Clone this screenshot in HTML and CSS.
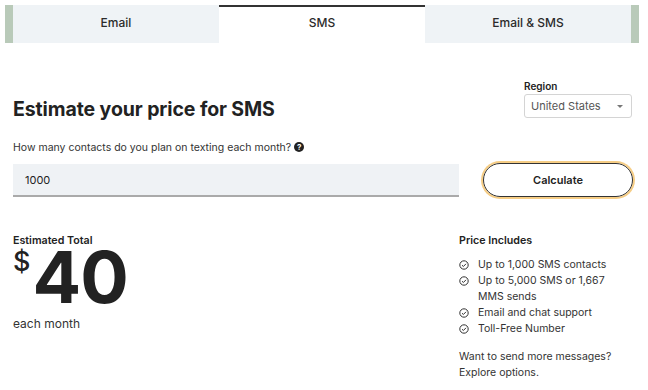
FILE: index.html
```html
<!DOCTYPE html>
<html lang="en">
<head>
<meta charset="utf-8">
<link rel="stylesheet" href="styles.css">
</head>
<body>
<div class="tabs">
  <div class="tab">Email</div>
  <div class="tab active">SMS</div>
  <div class="tab">Email &amp; SMS</div>
</div>
<div class="main">
  <div class="head-row">
    <h1 class="title">Estimate your price for SMS</h1>
    <div class="region">
      <div class="region-label">Region</div>
      <div class="select"><span>United States</span><span class="caret"></span></div>
    </div>
  </div>
  <div class="question">How many contacts do you plan on texting each month? <span class="qmark">?</span></div>
  <div class="input-row">
    <div class="input">1000</div>
    <div class="btn">Calculate</div>
  </div>
  <div class="results">
    <div class="total">
      <div class="total-label">Estimated Total</div>
      <div class="price"><span class="dollar">$</span><span class="amount">40</span></div>
      <div class="per">each month</div>
    </div>
    <div class="includes">
      <div class="inc-title">Price Includes</div>
      <ul class="list">
        <li><svg class="chk" viewBox="0 0 10 10"><circle cx="5" cy="5" r="4.2" fill="none" stroke="#333" stroke-width="1"/><path d="M3 5.2l1.4 1.3L7 3.8" fill="none" stroke="#333" stroke-width="1"/></svg><span>Up to 1,000 SMS contacts</span></li>
        <li><svg class="chk" viewBox="0 0 10 10"><circle cx="5" cy="5" r="4.2" fill="none" stroke="#333" stroke-width="1"/><path d="M3 5.2l1.4 1.3L7 3.8" fill="none" stroke="#333" stroke-width="1"/></svg><span>Up to 5,000 SMS or 1,667 MMS sends</span></li>
        <li><svg class="chk" viewBox="0 0 10 10"><circle cx="5" cy="5" r="4.2" fill="none" stroke="#333" stroke-width="1"/><path d="M3 5.2l1.4 1.3L7 3.8" fill="none" stroke="#333" stroke-width="1"/></svg><span>Email and chat support</span></li>
        <li><svg class="chk" viewBox="0 0 10 10"><circle cx="5" cy="5" r="4.2" fill="none" stroke="#333" stroke-width="1"/><path d="M3 5.2l1.4 1.3L7 3.8" fill="none" stroke="#333" stroke-width="1"/></svg><span>Toll-Free Number</span></li>
      </ul>
      <p class="more">Want to send more messages? Explore options.</p>
    </div>
  </div>
</div>
</body>
</html>
```
FILE: styles.css
```css
* { box-sizing: border-box; }
html, body { margin: 0; padding: 0; background: #fff; }
body { font-family: Inter, "Noto Sans", sans-serif; color: #222; }

.tabs {
  display: flex;
  margin: 5px 9px 0 5px;
  height: 38px;
  border-left: 8px solid #b9cab9;
  border-right: 8px solid #b9cab9;
}
.tab {
  flex: 1;
  display: flex;
  align-items: center;
  justify-content: center;
  background: #eff3f6;
  font-size: 12px;
  font-weight: 500;
  color: #2b2b2b;
  padding-bottom: 4px;
}
.tab.active {
  background: #fff;
  border-top: 2px solid #333;
  padding-bottom: 6px;
}

.main { padding: 0 15px 0 13px; }

.head-row {
  display: flex;
  justify-content: space-between;
  align-items: flex-start;
  margin-top: 37px;
  height: 60px;
}
.title {
  margin: 17px 0 0;
  font-size: 19.5px;
  font-weight: 700;
  color: #222;
  letter-spacing: -0.1px;
}
.region { width: 108px; margin-right: 1px; }
.region-label { font-size: 10px; font-weight: 600; color: #222; line-height: 12px; }
.select {
  margin-top: 2px;
  height: 24px;
  border: 1px solid #d4d4d4;
  border-radius: 3px;
  display: flex;
  align-items: center;
  justify-content: space-between;
  padding: 0 8px 0 6px;
  font-size: 11px;
  color: #555;
}
.caret {
  width: 0; height: 0;
  border-left: 3px solid transparent;
  border-right: 3px solid transparent;
  border-top: 3px solid #777;
}

.question {
  font-size: 10.5px;
  color: #333;
  display: flex;
  align-items: center;
  gap: 3px;
  height: 14px;
}
.qmark {
  width: 10px; height: 10px;
  border-radius: 50%;
  background: #222;
  color: #fff;
  font-size: 8px;
  font-weight: 700;
  display: inline-flex;
  align-items: center;
  justify-content: center;
}

.input-row {
  display: flex;
  align-items: center;
  margin-top: 9px;
}
.input {
  flex: none;
  width: 446px;
  height: 33px;
  background: #eff2f5;
  border-bottom: 2px solid #aaa;
  font-size: 11px;
  color: #222;
  display: flex;
  align-items: center;
  padding-left: 12px;
  padding-top: 1px;
}
.btn {
  flex: none;
  margin-left: 24px;
  width: 150px;
  height: 34px;
  border: 1px solid #333;
  border-radius: 17px;
  box-shadow: 0 0 0 2px #f6cd85;
  display: flex;
  align-items: center;
  justify-content: center;
  font-size: 11px;
  font-weight: 600;
  color: #222;
}

.results {
  display: flex;
  margin-top: 38px;
}
.total { width: 446px; flex: none; }
.total-label { font-size: 10.7px; font-weight: 600; color: #222; line-height: 12px; }
.price {
  display: flex;
  align-items: flex-start;
  height: 60px;
  margin-top: 1px;
}
.dollar {
  font-size: 27px;
  font-weight: 500;
  line-height: 28px;
  color: #222;
}
.amount {
  font-size: 72px;
  font-weight: 700;
  line-height: 58px;
  margin-left: 2px;
  letter-spacing: -1px;
  color: #222;
}
.per { font-size: 12px; color: #333; margin-top: 8px; }

.includes { width: 170px; }
.inc-title { font-size: 10.7px; font-weight: 600; color: #222; line-height: 12px; }
.list { list-style: none; margin: 10px 0 0; padding: 0; }
.list li {
  display: flex;
  align-items: flex-start;
  font-size: 10.5px;
  line-height: 16px;
  color: #333;
}
.chk { width: 10px; height: 10px; flex: none; margin: 3px 9px 0 0; }
.more {
  margin: 12px 0 0;
  font-size: 10.5px;
  line-height: 16px;
  color: #333;
  width: 160px;
}
```
